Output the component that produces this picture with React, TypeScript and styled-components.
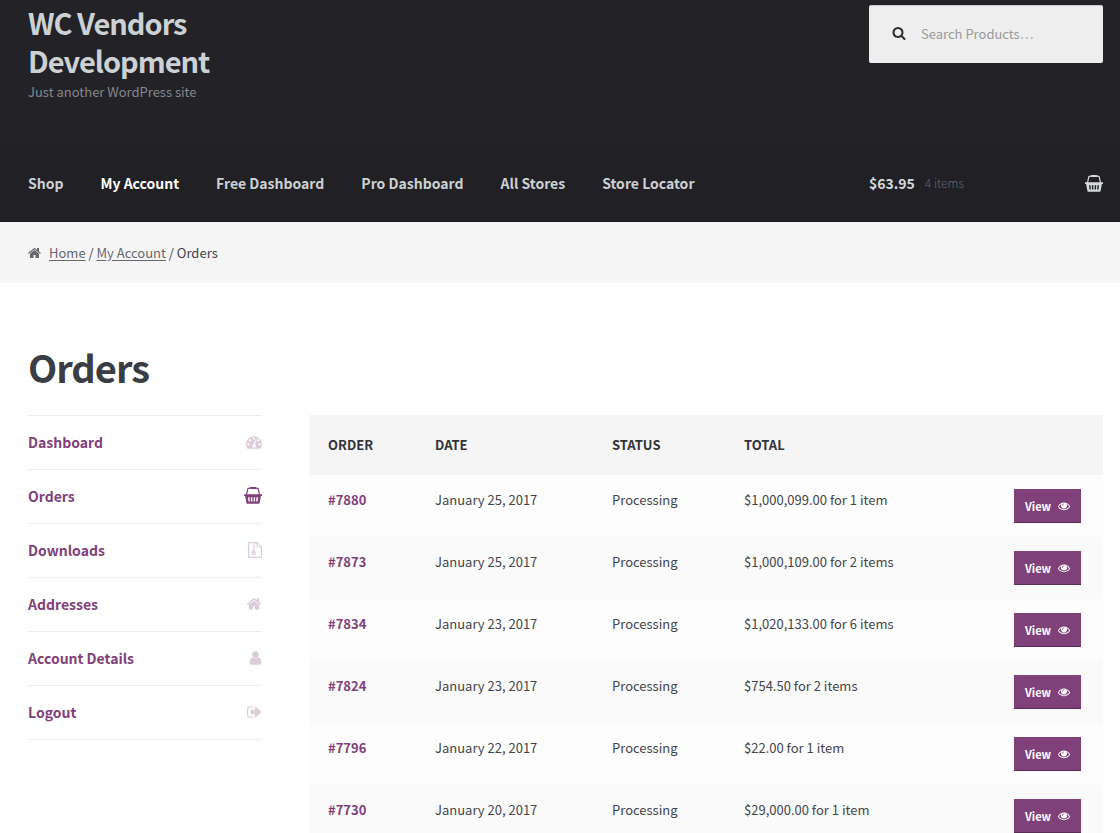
import React from "react";
import styled, { createGlobalStyle } from "styled-components";

const GlobalStyle = createGlobalStyle`
  *, *::before, *::after { box-sizing: border-box; }
  body {
    margin: 0;
    background: #fff;
    color: #43454b;
    font-family: "Noto Sans CJK SC", "Noto Sans", sans-serif;
    font-size: 13px;
    line-height: 22px;
  }
`;

const purple = "#80417a";

const Container = styled.div`
  padding: 0 17px 0 28px;
`;

const Header = styled.header`
  background: #232227;
  color: #d5d9db;
`;

const HeaderTop = styled(Container)`
  display: flex;
  justify-content: space-between;
  align-items: flex-start;
  height: 145px;
  padding-top: 3px;
`;

const Branding = styled.div`
  width: 234px;
`;

const SiteTitle = styled.a`
  display: block;
  color: #ccd1d4;
  font-size: 29px;
  line-height: 38px;
  font-weight: 700;
  letter-spacing: -1px;
  text-decoration: none;
`;

const Tagline = styled.p`
  margin: 2px 0 0;
  color: #85888d;
`;

const SearchForm = styled.form`
  display: flex;
  align-items: center;
  gap: 15px;
  width: 234px;
  height: 58px;
  margin-top: 2px;
  padding: 0 16px 0 23px;
  background: #eee;
  color: #2b2d33;
  border-radius: 2px;
  box-shadow: inset 0 1px 1px rgba(0, 0, 0, 0.15);
  svg { margin-bottom: 3px; }
`;

const SearchInput = styled.input`
  flex: 1;
  min-width: 0;
  padding: 0;
  border: 0;
  outline: 0;
  background: transparent;
  font: inherit;
  color: #43454b;
  &::placeholder { color: #9a9a9a; opacity: 1; }
`;

const NavBar = styled(Container)`
  display: flex;
  justify-content: space-between;
  align-items: center;
  height: 77px;
  background: #212025;
  border-bottom: 1px solid #19181c;
`;

const NavLinks = styled.nav`
  display: flex;
  gap: 37px;
`;

const NavLink = styled.a<{ $active?: boolean }>`
  font-size: 14px;
  font-weight: 700;
  color: ${(p) => (p.$active ? "#fff" : "#ccd1d4")};
  text-decoration: none;
`;

const CartLink = styled.a`
  display: flex;
  align-items: center;
  width: 234px;
  gap: 10px;
  color: #d5d9db;
  text-decoration: none;
  font-size: 14px;
  font-weight: 700;
  svg { margin-left: auto; }
`;

const CartCount = styled.span`
  font-size: 12px;
  font-weight: 300;
  color: #66666b;
`;

const Crumbs = styled(Container)`
  display: flex;
  align-items: center;
  gap: 7px;
  height: 61px;
  background: #f5f5f5;
  color: #43454b;
  svg { color: #66686e; }
  a { color: #66686e; text-underline-offset: 2px; }
`;

const PageTitle = styled.h1`
  margin: 0;
  padding: 52px 0 16px;
  font-size: 38px;
  line-height: 64px;
  font-weight: 700;
  letter-spacing: -1px;
  color: #3a3d43;
`;

const Columns = styled.div`
  display: grid;
  grid-template-columns: 234px minmax(0, 1fr);
  column-gap: 47px;
  align-items: start;
`;

const AccountNav = styled.ul`
  margin: 0;
  padding: 0;
  list-style: none;
  border-top: 1px solid #ececec;
`;

const AccountItem = styled.li`
  border-bottom: 1px solid #ececec;
`;

const AccountLink = styled.a<{ $active?: boolean }>`
  display: flex;
  justify-content: space-between;
  align-items: center;
  height: 53px;
  padding-bottom: 2px;
  font-size: 14px;
  font-weight: 700;
  color: ${purple};
  text-decoration: none;
  svg { opacity: ${(p) => (p.$active ? 1 : 0.26)}; }
`;

const OrdersTable = styled.table`
  width: 100%;
  border-collapse: collapse;
  table-layout: fixed;
  text-align: left;
`;

const HeadCell = styled.th<{ $width?: string }>`
  width: ${(p) => p.$width || "auto"};
  height: 60px;
  padding: 0 0 0 19px;
  background: #f5f5f5;
  color: #333439;
  font-weight: 700;
  text-transform: uppercase;
`;

const Row = styled.tr`
  background: #fdfdfd;
  &:nth-child(even) { background: #fafafa; }
`;

const Cell = styled.td<{ $end?: boolean }>`
  height: 62px;
  padding: ${(p) => (p.$end ? "14px 22px 0 0" : "14px 0 0 19px")};
  vertical-align: top;
  text-align: ${(p) => (p.$end ? "right" : "left")};
`;

const OrderLink = styled.a`
  color: ${purple};
  font-weight: 700;
  text-decoration: none;
`;

const ViewButton = styled.button`
  display: inline-flex;
  align-items: center;
  gap: 7px;
  height: 34px;
  padding: 2px 11px 1px;
  border: 0;
  border-bottom: 1px solid #5a2d56;
  background: ${purple};
  color: #fff;
  font: inherit;
  font-size: 11px;
  font-weight: 700;
  cursor: pointer;
`;

type IconProps = { d: string; size: number; box?: string; width?: number };

const Icon = ({ d, size, width, box = "0 0 1792 1792" }: IconProps) => (
  <svg width={width || size} height={size} viewBox={box} fill="currentColor" fillRule="evenodd" aria-hidden="true">
    <path d={d} />
  </svg>
);

const paths = {
  home: "M1408 992v480q0 26-19 45t-45 19h-384v-384h-256v384h-384q-26 0-45-19t-19-45v-480q0-1 .5-3t.5-3l575-474 575 474q1 2 1 6zm223-69l-62 74q-8 9-21 11h-3q-13 0-21-7l-692-577-692 577q-12 8-24 7-13-2-21-11l-62-74q-8-10-7-23.5t11-21.5l719-599q32-26 76-26t76 26l244 204v-195q0-14 9-23t23-9h192q14 0 23 9t9 23v408l219 182q10 8 11 21.5t-7 23.5z",
  search: "M1216 832q0-185-131.5-316.5t-316.5-131.5-316.5 131.5-131.5 316.5 131.5 316.5 316.5 131.5 316.5-131.5 131.5-316.5zm512 832q0 52-38 90t-90 38q-54 0-90-38l-343-342q-179 124-399 124-143 0-273.5-55.5t-225-150-150-225-55.5-273.5 55.5-273.5 150-225 225-150 273.5-55.5 273.5 55.5 225 150 150 225 55.5 273.5q0 220-124 399l343 343q37 37 37 90z",
  eye: "M1664 960q-152-236-381-353 61 104 61 225 0 185-131.5 316.5t-316.5 131.5-316.5-131.5-131.5-316.5q0-121 61-225-229 117-381 353 133 205 333.5 326.5t434.5 121.5 434.5-121.5 333.5-326.5zm-720-384q0-20-14-34t-34-14q-125 0-214.5 89.5t-89.5 214.5q0 20 14 34t34 14 34-14 14-34q0-86 61-147t147-61q20 0 34-14t14-34zm848 384q0 34-20 69-140 230-376.5 368.5t-499.5 138.5-499.5-139-376.5-368q-20-35-20-69t20-69q140-229 376.5-368t499.5-139 499.5 139 376.5 368q20 35 20 69z",
  gauge: "M384 1152q0-53-37.5-90.5t-90.5-37.5-90.5 37.5-37.5 90.5 37.5 90.5 90.5 37.5 90.5-37.5 37.5-90.5zm192-448q0-53-37.5-90.5t-90.5-37.5-90.5 37.5-37.5 90.5 37.5 90.5 90.5 37.5 90.5-37.5 37.5-90.5zm428 481l101-382q6-26-7.5-48.5t-38.5-29.5-48 6.5-30 39.5l-101 382q-60 5-107 43.5t-63 98.5q-20 77 20 146t117 89 146-20 89-117q16-60-6-117t-72-91zm660-33q0-53-37.5-90.5t-90.5-37.5-90.5 37.5-37.5 90.5 37.5 90.5 90.5 37.5 90.5-37.5 37.5-90.5zm-640-640q0-53-37.5-90.5t-90.5-37.5-90.5 37.5-37.5 90.5 37.5 90.5 90.5 37.5 90.5-37.5 37.5-90.5zm448 192q0-53-37.5-90.5t-90.5-37.5-90.5 37.5-37.5 90.5 37.5 90.5 90.5 37.5 90.5-37.5 37.5-90.5zm320 448q0 261-141 483-19 29-54 29h-1402q-35 0-54-29-141-221-141-483 0-182 71-348t191-286 286-191 348-71 348 71 286 191 191 286 71 348z",
  user: "M1536 1399q0 109-62.5 187t-150.5 78h-854q-88 0-150.5-78t-62.5-187q0-85 8.5-160.5t31.5-152 58.5-131 94-89 134.5-34.5q131 128 313 128t313-128q76 0 134.5 34.5t94 89 58.5 131 31.5 152 8.5 160.5zm-256-887q0 159-112.5 271.5t-271.5 112.5-271.5-112.5-112.5-271.5 112.5-271.5 271.5-112.5 271.5 112.5 112.5 271.5z",
  logout: "M704 1440q0 4 1 20t.5 26.5-3 23.5-10 19.5-20.5 6.5h-320q-119 0-203.5-84.5t-84.5-203.5v-704q0-119 84.5-203.5t203.5-84.5h320q13 0 22.5 9.5t9.5 22.5q0 4 1 20t.5 26.5-3 23.5-10 19.5-20.5 6.5h-320q-66 0-113 47t-47 113v704q0 66 47 113t113 47h312l11.5 1 11.5 3 8 5.5 7 9 2 13.5zm928-544q0 26-19 45l-544 544q-19 19-45 19t-45-19-19-45v-288h-448q-26 0-45-19t-19-45v-384q0-26 19-45t45-19h448v-288q0-26 19-45t45-19 45 19l544 544q19 19 19 45z",
  archive: "M1 0h8.5L14 4.500V15q0 1-1 1H1q-1 0-1-1V1q0-1 1-1zM1.200 1.200v13.600h11.600V5.600H9.500q-1 0-1-1V1.200H7v1H5.800v-1zM9.700 1.500v2.900h2.900zM4.600 2.200h1.200v1.200H4.600zM5.800 3.400H7v1.200H5.800zM4.600 4.600h1.200v1.200H4.600zM5.800 5.800H7V7H5.800zM5 7.500h1.600l1.300 4q.2 2-2.100 2T3.700 11.500zM5.800 11q-1 0-1 .7t1 .7 1-.7-1-.7z",
  basket: "M6 0h6v.6l1.700.2q.9.100 1.100.9L16 7.200h2v1.700h-1.100l-1.300 7.100q-.1.800-.9.800H3.300q-.8 0-.9-.8L1.100 8.900H0V7.200h2L3.200 1.700q.2-.8 1.100-.9L6 .6zM6 1.700l-1.600.2-1.200 5.300h11.600l-1.200-5.300L12 1.700v.2H6zM4 10.200l.5 4.400h1.400l-.4-4.400zM6.800 10.200l.2 4.400h1.400l-.1-4.400zM9.700 10.200l-.1 4.400H11l.2-4.400zM12.500 10.200l-.4 4.400h1.400l.5-4.400z",
};

const Basket = () => <Icon d={paths.basket} size={17} width={18} box="0 0 18 17" />;

const menu = [
  { label: "Dashboard", icon: <Icon d={paths.gauge} size={16} /> },
  { label: "Orders", icon: <Basket />, active: true },
  { label: "Downloads", icon: <Icon d={paths.archive} size={16} width={14} box="0 0 14 16" /> },
  { label: "Addresses", icon: <Icon d={paths.home} size={16} width={15} box="64 0 1664 1792" /> },
  { label: "Account Details", icon: <Icon d={paths.user} size={16} width={13} box="256 0 1280 1792" /> },
  { label: "Logout", icon: <Icon d={paths.logout} size={16} width={15} box="64 0 1664 1792" /> },
];

const orders = [
  ["#7880", "January 25, 2017", "$1,000,099.00 for 1 item"],
  ["#7873", "January 25, 2017", "$1,000,109.00 for 2 items"],
  ["#7834", "January 23, 2017", "$1,020,133.00 for 6 items"],
  ["#7824", "January 23, 2017", "$754.50 for 2 items"],
  ["#7796", "January 22, 2017", "$22.00 for 1 item"],
  ["#7730", "January 20, 2017", "$29,000.00 for 1 item"],
];

const navItems = ["Shop", "My Account", "Free Dashboard", "Pro Dashboard", "All Stores", "Store Locator"];

export default function App() {
  return (
    <>
      <GlobalStyle />
      <Header>
        <HeaderTop>
          <Branding>
            <SiteTitle href="#">WC Vendors Development</SiteTitle>
            <Tagline>Just another WordPress site</Tagline>
          </Branding>
          <SearchForm role="search">
            <Icon d={paths.search} size={14} />
            <SearchInput type="search" aria-label="Search products" placeholder="Search Products…" />
          </SearchForm>
        </HeaderTop>
        <NavBar>
          <NavLinks aria-label="Primary">
            {navItems.map((item) => (
              <NavLink key={item} href="#" $active={item === "My Account"}>{item}</NavLink>
            ))}
          </NavLinks>
          <CartLink href="#">
            $63.95 <CartCount>4 items</CartCount>
            <Basket />
          </CartLink>
        </NavBar>
      </Header>
      <Crumbs as="nav" aria-label="Breadcrumb">
        <Icon d={paths.home} size={14} />
        <span>
          <a href="#">Home</a> / <a href="#">My Account</a> / Orders
        </span>
      </Crumbs>
      <Container as="main">
        <PageTitle>Orders</PageTitle>
        <Columns>
          <AccountNav>
            {menu.map((m) => (
              <AccountItem key={m.label}>
                <AccountLink href="#" $active={m.active}>{m.label}{m.icon}</AccountLink>
              </AccountItem>
            ))}
          </AccountNav>
          <OrdersTable>
            <thead>
              <tr>
                <HeadCell $width="107px">Order</HeadCell>
                <HeadCell $width="177px">Date</HeadCell>
                <HeadCell $width="132px">Status</HeadCell>
                <HeadCell>Total</HeadCell>
                <HeadCell $width="130px" aria-label="Actions" />
              </tr>
            </thead>
            <tbody>
              {orders.map(([id, date, total]) => (
                <Row key={id}>
                  <Cell><OrderLink href="#">{id}</OrderLink></Cell>
                  <Cell>{date}</Cell>
                  <Cell>Processing</Cell>
                  <Cell>{total}</Cell>
                  <Cell $end>
                    <ViewButton type="button">View <Icon d={paths.eye} size={12} /></ViewButton>
                  </Cell>
                </Row>
              ))}
            </tbody>
          </OrdersTable>
        </Columns>
      </Container>
    </>
  );
}
